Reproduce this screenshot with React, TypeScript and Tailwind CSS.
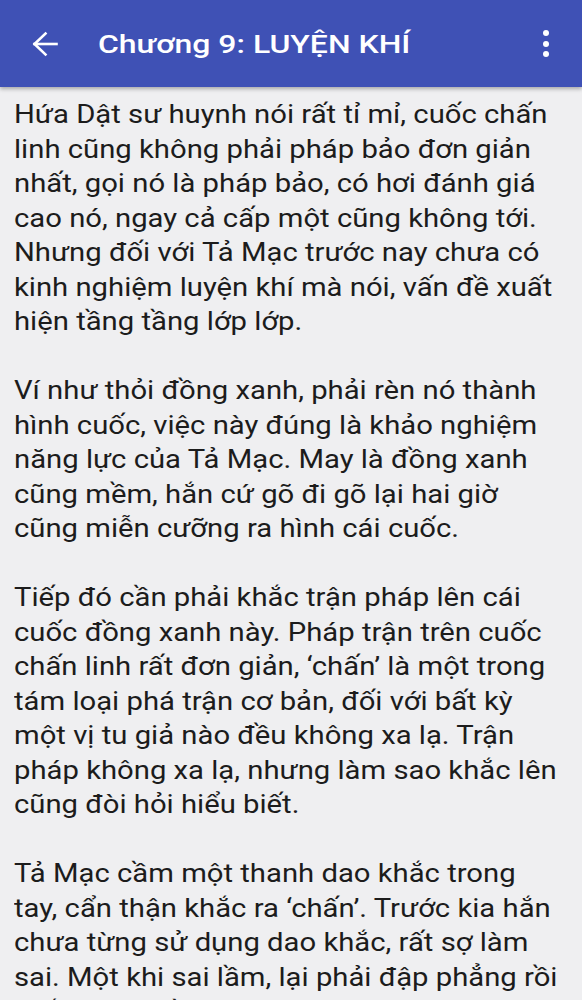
import React from "react";

// the reference is a slightly wide capture, so text lines are kept as written
// and stretched a little on the x axis
const paragraphs: string[][] = [
  [
    "Hứa Dật sư huynh nói rất tỉ mỉ, cuốc chấn",
    "linh cũng không phải pháp bảo đơn giản",
    "nhất, gọi nó là pháp bảo, có hơi đánh giá",
    "cao nó, ngay cả cấp một cũng không tới.",
    "Nhưng đối với Tả Mạc trước nay chưa có",
    "kinh nghiệm luyện khí mà nói, vấn đề xuất",
    "hiện tầng tầng lớp lớp.",
  ],
  [
    "Ví như thỏi đồng xanh, phải rèn nó thành",
    "hình cuốc, việc này đúng là khảo nghiệm",
    "năng lực của Tả Mạc. May là đồng xanh",
    "cũng mềm, hắn cứ gõ đi gõ lại hai giờ",
    "cũng miễn cưỡng ra hình cái cuốc.",
  ],
  [
    "Tiếp đó cần phải khắc trận pháp lên cái",
    "cuốc đồng xanh này. Pháp trận trên cuốc",
    "chấn linh rất đơn giản, ‘chấn’ là một trong",
    "tám loại phá trận cơ bản, đối với bất kỳ",
    "một vị tu giả nào đều không xa lạ. Trận",
    "pháp không xa lạ, nhưng làm sao khắc lên",
    "cũng đòi hỏi hiểu biết.",
  ],
  [
    "Tả Mạc cầm một thanh dao khắc trong",
    "tay, cẩn thận khắc ra ‘chấn’. Trước kia hắn",
    "chưa từng sử dụng dao khắc, rất sợ làm",
    "sai. Một khi sai lầm, lại phải đập phẳng rồi",
    "khắc lại từ đầu.",
  ],
];

export default function App() {
  return (
    <div className="h-[1000px] overflow-hidden bg-[#efeff1] font-['Roboto',sans-serif]">
      <header className="relative z-10 flex h-[87px] items-center bg-[#3f51b5] text-white shadow-[0_2px_4px_rgba(0,0,0,0.3)]">
        <button className="ml-[32px] flex h-[26px] w-[26px] items-center justify-center">
          <svg viewBox="0 0 26 26" className="h-[26px] w-[26px]" fill="none" stroke="currentColor" strokeWidth="2.6" strokeLinecap="square">
            <path d="M2.5 13H24.5" />
            <path d="M13.5 2.5L2.5 13l11 10.5" />
          </svg>
        </button>
        <h1 className="ml-[40px] origin-left scale-x-[1.205] whitespace-nowrap text-[26.5px] font-medium">
          Chương 9: LUYỆN KHÍ
        </h1>
        <button className="ml-auto mr-[32px] flex h-[27px] w-[8px] flex-col items-center justify-between">
          <span className="h-[6px] w-[6px] rounded-full bg-white" />
          <span className="h-[6px] w-[6px] rounded-full bg-white" />
          <span className="h-[6px] w-[6px] rounded-full bg-white" />
        </button>
      </header>
      <main className="flex flex-col gap-[34.5px] px-[14px] pt-[10px] text-[26px] leading-[34.5px] text-[#1c1c1c]">
        {paragraphs.map((lines, i) => (
          <p key={i} className="origin-left scale-x-[1.125]">
            {lines.map((line, j) => (
              <span key={j} className="block whitespace-nowrap">
                {line}
              </span>
            ))}
          </p>
        ))}
      </main>
    </div>
  );
}
